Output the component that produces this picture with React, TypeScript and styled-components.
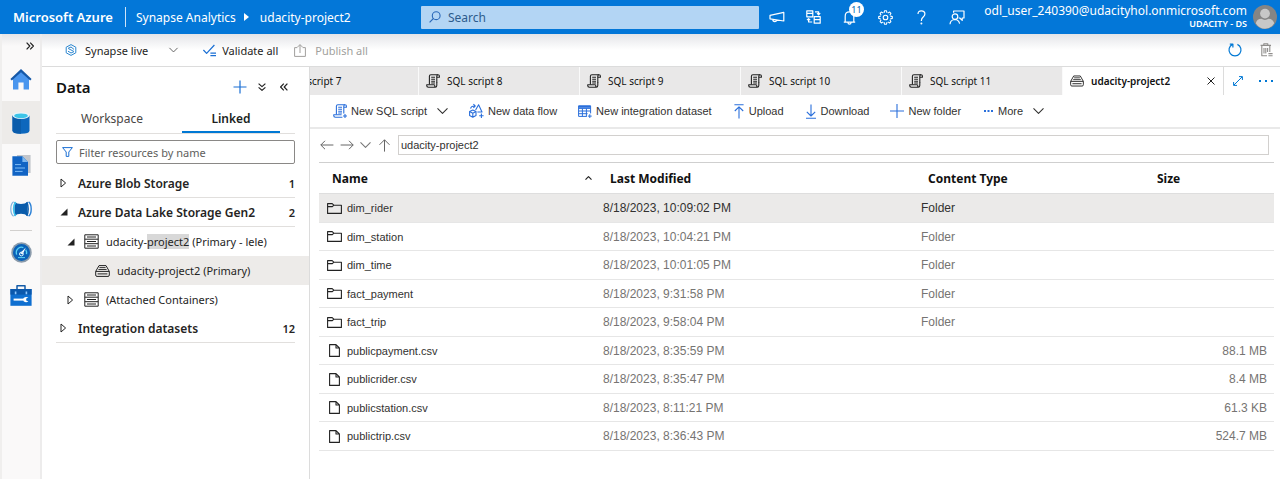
import React from 'react';
import styled, { createGlobalStyle, css } from 'styled-components';

const GlobalStyle = createGlobalStyle`
  *, *::before, *::after { box-sizing: border-box; }
  body { margin: 0; background: #fff; }
  button, input { font: inherit; color: inherit; }
  #root { min-height: 100vh; display: flex; flex-direction: column; }
`;

const ui = '"Noto Sans", "Open Sans", sans-serif';
const grid = '"Liberation Sans", Arial, sans-serif';
const blue = '#0078d4';

/* ---------- shared ---------- */

const PlainButton = styled.button`
  display: inline-flex;
  align-items: center;
  justify-content: center;
  padding: 0;
  border: 0;
  background: none;
  cursor: pointer;
  white-space: nowrap;
`;

const Svg = styled.svg`
  display: block;
  flex: none;
  overflow: visible;
`;

type IconProps = {
  w: number;
  h?: number;
  box?: string;
  color?: string;
  sw?: number;
  children: React.ReactNode;
};

function Icon({ w, h = w, box, color = 'currentColor', sw = 1, children }: IconProps) {
  return (
    <Svg
      width={w}
      height={h}
      viewBox={box ?? `0 0 ${w} ${h}`}
      fill="none"
      stroke={color}
      strokeWidth={sw}
      strokeLinejoin="round"
      aria-hidden="true"
    >
      {children}
    </Svg>
  );
}

const ChevronDown = ({ w = 11, color = '#323130' }: { w?: number; color?: string }) => (
  <Icon w={w} h={6} box="0 0 11 6" color={color} sw={1.1}>
    <path d="M.5.4 5.5 5.4 10.5.4" />
  </Icon>
);

const ScriptIcon = ({ color = '#222', add = false }: { color?: string; add?: boolean }) => (
  <Icon w={14} color={color} sw={1.1}>
    <path d="M3.4 10.6V2.2Q3.4.7 4.9.7H12Q13.4.7 13.4 2.1V3.3H10.8" />
    <path d={add ? 'M12 .7Q10.8.7 10.8 2.1V9.4' : 'M12 .7Q10.8.7 10.8 2.1V8.6'} />
    <path d={add ? 'M8.6 10.7H.7V11.6Q.7 13.3 2.4 13.3H9.4' : 'M8.6 10.7H.7V11.6Q.7 13.3 2.4 13.3H9.2Q10.8 13.3 10.8 11.6V8M8.6 10.7Q8.5 13 9.6 13.2'} />
    <path d="M5.2 3.2H9M5.2 5.2H9M5.2 7.2H9M5.2 9H9" />
    {add && <path d="M12 10V14M10 12H14" />}
  </Icon>
);

const ContainerIcon = ({ w = 15 }: { w?: number }) => (
  <Icon w={w} h={12} box="0 0 15 12" color="#222">
    <path d="M4 .6H11L14.3 6.4V10Q14.3 11.4 13 11.4H2Q.7 11.4.7 10V6.4ZM.7 6.4H14.3M2.6 8.9H12.4" />
    <path d="M4.4 2.6H10.6M3.4 4.5H11.6" strokeWidth=".9" />
  </Icon>
);

const StorageIcon = () => (
  <Icon w={15} h={15} color="#222">
    <path d="M.8.8H14.2V14.2H.8ZM.8 5.2H14.2M.8 9.7H14.2M3 3H12M3 7.5H12M3 12H12" />
  </Icon>
);

/* ---------- top bar ---------- */

const TopBar = styled.header`
  display: flex;
  align-items: center;
  height: 34px;
  background: #0377d8;
  color: #fff;
  font-family: ${ui};
  font-size: 12px;
`;

const Breadcrumb = styled.nav`
  display: flex;
  align-items: center;
  flex: 0 0 421px;
  padding-left: 13px;
  white-space: nowrap;

  a { color: inherit; text-decoration: none; }
`;

const Brand = styled.a`
  width: 112px;
  font-size: 13px;
  font-weight: 600;
`;

const BrandRule = styled.span`
  width: 1px;
  height: 20px;
  margin-right: 10px;
  background: #cfe4f8;
`;

const CrumbArrow = styled.span`
  margin: 0 11px 0 8px;
  border: 4px solid transparent;
  border-left: 5px solid #fff;
  border-right: 0;
`;

const SearchBox = styled.label`
  display: flex;
  align-items: center;
  flex: 0 1 338px;
  gap: 7px;
  height: 23px;
  padding: 0 8px;
  border-radius: 1px;
  background: #b3d5f4;
  color: #2c5f9e;

  input {
    flex: 1;
    min-width: 0;
    border: 0;
    outline: 0;
    background: none;
    padding: 0;
  }
  input::placeholder { color: #2d5b8c; opacity: 1; }
`;

const TopIcons = styled.div`
  display: flex;
`;

const TopIconButton = styled(PlainButton)`
  position: relative;
  width: 36px;
  height: 32px;
`;

const Badge = styled.span`
  position: absolute;
  top: 1px;
  left: 18px;
  width: 15px;
  height: 15px;
  border-radius: 50%;
  background: #fff;
  color: #0063b1;
  font-size: 9px;
  line-height: 15px;
  text-align: center;
`;

const Account = styled.div`
  display: flex;
  align-items: center;
  gap: 6px;
  margin-left: auto;
  padding-right: 3px;
  text-align: right;
  line-height: 14px;
`;

const Directory = styled.div`
  font-size: 9px;
  line-height: 12px;
  font-weight: 600;
`;

/* ---------- frame ---------- */

const Frame = styled.div`
  display: flex;
  flex: 1;
`;

const Rail = styled.nav`
  display: flex;
  flex-direction: column;
  flex: 0 0 42px;
  border-left: 2px solid #f0efee;
  border-right: 2px solid #edecec;
  background: linear-gradient(#e6e6e8, #faf9f9 12px);
`;

const RailToggle = styled(PlainButton)`
  justify-content: flex-end;
  height: 24px;
  padding-right: 6px;
`;

const RailButton = styled(PlainButton)<{ $on?: boolean }>`
  height: 43px;
  background: ${p => (p.$on ? '#edebe9' : 'transparent')};
`;

const RailRule = styled.hr`
  width: 22px;
  margin: 0 auto;
  border: 0;
  border-top: 1px solid #d2d0ce;
`;

const Workspace = styled.div`
  display: flex;
  flex-direction: column;
  flex: 1;
  min-width: 0;
`;

const CommandBar = styled.div`
  display: flex;
  align-items: center;
  height: 33px;
  padding: 0 7px 0 23px;
  border-bottom: 1px solid #dcdcdc;
  background: linear-gradient(#e4e5e8, #fff 16px);
  color: #252423;
  font-family: ${ui};
  font-size: 11px;
`;

const Command = styled(PlainButton)<{ $gap?: number; $after?: number }>`
  gap: ${p => p.$gap ?? 8}px;
  margin-right: ${p => p.$after ?? 0}px;
  &:disabled { color: #a19f9d; cursor: default; }
`;

const PushRight = styled.div`
  display: flex;
  gap: 18px;
  margin-left: auto;
`;

const Body = styled.div`
  display: flex;
  flex: 1;
`;

/* ---------- data panel ---------- */

const Panel = styled.aside`
  flex: 0 0 268px;
  border-right: 1px solid #dcdcdc;
  color: #252423;
  font-family: ${ui};
  font-size: 11px;
`;

const PanelHead = styled.div`
  display: flex;
  align-items: center;
  height: 38px;
  padding: 2px 14px 0 14px;

  h2 {
    flex: 1;
    margin: 0;
    color: #111;
    font-size: 15px;
    font-weight: 600;
  }
`;

const HeadButton = styled(PlainButton)`
  width: 22px;
  height: 20px;
`;

const PanelTabs = styled.div`
  display: flex;
  margin: 0 14px;
  border-bottom: 1px solid #e1dfdd;
  font-size: 12px;
`;

const PanelTab = styled(PlainButton)<{ $on?: boolean }>`
  width: ${p => (p.$on ? 98 : 112)}px;
  height: 28px;
  margin: ${p => (p.$on ? '0 0 0 14px' : '0')};
  border-bottom: 2px solid ${p => (p.$on ? blue : 'transparent')};
  color: ${p => (p.$on ? '#201f1e' : '#484644')};
  font-weight: ${p => (p.$on ? 600 : 400)};
`;

const Filter = styled.label`
  display: flex;
  align-items: center;
  gap: 6px;
  height: 24px;
  margin: 6px 14px 5px;
  padding: 0 5px;
  border: 1px solid #8a8886;
  border-radius: 2px;

  input {
    flex: 1;
    min-width: 0;
    border: 0;
    outline: 0;
    padding: 0;
    background: none;
  }
  input::placeholder { color: #605e5c; opacity: 1; }
`;

const Tree = styled.ul`
  margin: 0;
  padding: 0;
  list-style: none;
`;

const TreeGroup = styled.li`
  display: flex;
  align-items: center;
  height: 29px;
  margin: 0 14px;
  padding-left: 4px;
  border-bottom: 1px solid #e1dfdd;
  font-size: 12px;
  font-weight: 600;

  span { flex: 1; }
  b { font-size: 11px; font-weight: 600; }
`;

const TreeItem = styled.li<{ $indent: number; $on?: boolean }>`
  display: flex;
  align-items: center;
  gap: 7px;
  height: 29px;
  padding-left: ${p => p.$indent}px;
  background: ${p => (p.$on ? '#edebe9' : 'transparent')};

  mark { background: #d8d8d8; color: inherit; }
`;

const Twisty = styled(PlainButton)`
  justify-content: flex-start;
  width: 18px;
  height: 20px;
  flex: none;
`;

const TreeTwisty = styled(Twisty)`
  width: 10px;
`;

/* ---------- editor ---------- */

const Editor = styled.main`
  display: flex;
  flex-direction: column;
  flex: 1;
  min-width: 0;
`;

const TabStrip = styled.div`
  display: flex;
  height: 28px;
  font-family: ${ui};
  font-size: 10px;
`;

const TabScroller = styled.div`
  display: flex;
  flex: 1;
  min-width: 0;
  justify-content: flex-end;
  overflow: hidden;
  background: #e9e8e8;
`;

const EditorTab = styled.div<{ $on?: boolean }>`
  display: flex;
  align-items: center;
  gap: 7px;
  flex: 0 0 161px;
  padding: 0 8px 0 7px;
  border-right: 1px solid ${p => (p.$on ? '#dcdcdc' : '#fafafa')};
  background: ${p => (p.$on ? '#fff' : '#e9e8e8')};
  color: #111;
  font-weight: ${p => (p.$on ? 600 : 400)};
  white-space: nowrap;

  span { flex: 1; }
`;

const TabTools = styled.div`
  display: flex;
  align-items: center;
  flex: 0 0 54px;
`;

const TabTool = styled(PlainButton)`
  flex: none;
  width: 28px;
`;

const Actions = styled.div`
  display: flex;
  align-items: center;
  gap: 21px;
  height: 34px;
  padding-left: 23px;
  border-bottom: 2px solid #e9e9e9;
  color: #323130;
  font-family: ${grid};
  font-size: 11px;
`;

const Action = styled(PlainButton)`
  gap: 4px;
`;

const ActionLabel = styled.span<{ $menu?: boolean }>`
  margin-right: ${p => (p.$menu ? 6 : 0)}px;
`;

const PathBar = styled.div`
  display: flex;
  align-items: center;
  gap: 6px;
  padding: 6px 11px 7px 10px;
  font-family: ${grid};
  font-size: 12px;
  color: #323130;
`;

const PathInput = styled.input`
  flex: 1;
  min-width: 0;
  height: 20px;
  padding: 0 2px;
  border: 1px solid #d2d0ce;
  outline: 0;
  font-size: 11px;
`;

const FileTable = styled.table`
  width: calc(100% - 15px);
  margin-left: 9px;
  border-collapse: collapse;
  table-layout: fixed;
  font-family: ${grid};
  font-size: 12px;
  color: #767472;
`;

const HeadCell = styled.th<{ $w?: number }>`
  width: ${p => (p.$w ? `${p.$w}px` : 'auto')};
  height: 31px;
  padding: 0 5px 0 13px;
  border-top: 1px solid #cfcfcf;
  border-bottom: 1px solid #dedede;
  color: #111;
  font-family: ${ui};
  font-size: 12px;
  font-weight: 700;
  text-align: left;
`;

const HeadLabel = styled.div`
  display: flex;
  align-items: center;
  justify-content: space-between;
`;

const FileRow = styled.tr<{ $on?: boolean }>`
  height: 28px;
  &:nth-child(odd) { height: 29px; }
  ${p => p.$on && css`
    background: #ebeae9;
    color: #323130;
  `}
`;

const Cell = styled.td`
  padding: 0 7px 0 6px;
  border-bottom: 1px solid #e6e6e6;
`;

const NameCell = styled(Cell)`
  padding-left: 8px;
  color: #323130;
  font-size: 11px;
`;

const SizeCell = styled(Cell)`
  text-align: right;
`;

const FileName = styled.div`
  display: flex;
  align-items: center;
  gap: 5px;
`;

const FileGlyph = styled.span`
  display: flex;
  justify-content: center;
  width: 15px;
`;

/* ---------- data ---------- */

const scriptTabs = [7, 8, 9, 10, 11];

const files = [
  { name: 'dim_rider', date: '8/18/2023, 10:09:02 PM', folder: true, size: '' },
  { name: 'dim_station', date: '8/18/2023, 10:04:21 PM', folder: true, size: '' },
  { name: 'dim_time', date: '8/18/2023, 10:01:05 PM', folder: true, size: '' },
  { name: 'fact_payment', date: '8/18/2023, 9:31:58 PM', folder: true, size: '' },
  { name: 'fact_trip', date: '8/18/2023, 9:58:04 PM', folder: true, size: '' },
  { name: 'publicpayment.csv', date: '8/18/2023, 8:35:59 PM', folder: false, size: '88.1 MB' },
  { name: 'publicrider.csv', date: '8/18/2023, 8:35:47 PM', folder: false, size: '8.4 MB' },
  { name: 'publicstation.csv', date: '8/18/2023, 8:11:21 PM', folder: false, size: '61.3 KB' },
  { name: 'publictrip.csv', date: '8/18/2023, 8:36:43 PM', folder: false, size: '524.7 MB' },
];

/* ---------- small drawings ---------- */

const Closed = () => (
  <Icon w={7} h={10} color="#222">
    <path d="M1 1V9L5.6 5Z" />
  </Icon>
);

const Opened = () => (
  <Icon w={8} h={8} color="none">
    <path d="M7.5.5V7.5H.5Z" fill="#222" />
  </Icon>
);

const Gear = () => {
  const teeth = Array.from({ length: 8 }, (_, i) => (
    <path key={i} d="M6 2.8 6.6.7H8.4L9 2.8" transform={`rotate(${i * 45} 7.5 7.5)`} />
  ));
  return (
    <Icon w={15} sw={1.1}>
      {teeth}
      <circle cx="7.5" cy="7.5" r="2.3" />
    </Icon>
  );
};

function TopBarView() {
  return (
    <TopBar>
      <Breadcrumb aria-label="Breadcrumb">
        <Brand href="#">Microsoft Azure</Brand>
        <BrandRule />
        <a href="#">Synapse Analytics</a>
        <CrumbArrow />
        <a href="#">udacity-project2</a>
      </Breadcrumb>
      <SearchBox>
        <Icon w={12} color="#2a68b8" sw={1.1}>
          <circle cx="7.2" cy="4.7" r="3.9" />
          <path d="M4.4 7.5.6 11.4" />
        </Icon>
        <input type="search" placeholder="Search" aria-label="Search" />
      </SearchBox>
      <TopIcons>
        <TopIconButton aria-label="Announcements">
          <Icon w={16} h={12} sw={1.2}>
            <path d="M1 4.4 14.8 1.3V10L1 7.8ZM3.6 8.3Q3.8 10.6 5.8 10.6 7.4 10.6 7.8 9" />
          </Icon>
        </TopIconButton>
        <TopIconButton aria-label="Switch directory">
          <Icon w={15} h={14} sw={1.2}>
            <path d="M.8.8H6.8V6.8H.8ZM.8 3.4H6.8M8.2 6.6H14.2V13.2H8.2ZM8.2 9.6H14.2M9 1.8H12.6V4.6M11 3.2 12.6 4.9 14.2 3.2M6.2 12H2.6V9M1 10.2 2.6 8.6 4.2 10.2" />
          </Icon>
        </TopIconButton>
        <TopIconButton aria-label="Notifications, 11 new">
          <Icon w={13} h={15} sw={1.2}>
            <path d="M.8 12.1H12.2M2.2 12V6.2Q2.2 1.8 6.5 1.8 10.8 1.8 10.8 6.2V12M4.9 12.4Q5 14.2 6.5 14.2 8 14.2 8.1 12.4" />
          </Icon>
          <Badge>11</Badge>
        </TopIconButton>
        <TopIconButton aria-label="Settings">
          <Gear />
        </TopIconButton>
        <TopIconButton aria-label="Help">
          <Icon w={9} h={15} sw={1.2}>
            <path d="M1 4Q1 .9 4.3.9 7.9.9 7.9 4 7.9 5.6 6.2 7 4.4 8.5 4.4 10.6V11" />
            <circle cx="4.4" cy="13.6" r=".4" fill="currentColor" />
          </Icon>
        </TopIconButton>
        <TopIconButton aria-label="Feedback">
          <Icon w={16} h={15} sw={1.2}>
            <circle cx="6" cy="6.6" r="2.8" />
            <path d="M1 14.3Q1.4 9.6 6 9.5 9.6 9.6 10.6 13.6M4.6 2.8V1H15V8H13.2V10.4L10.8 8H9.6" />
          </Icon>
        </TopIconButton>
      </TopIcons>
      <Account>
        <div>
          <div>odl_user_240390@udacityhol.onmicrosoft.com</div>
          <Directory>UDACITY - DS</Directory>
        </div>
        <Icon w={24} color="none">
          <circle cx="12" cy="12" r="12" fill="#858585" />
          <circle cx="12" cy="8.6" r="4.9" fill="#c8c8c8" />
          <path d="M2.8 18.2Q4 13.8 8.4 13.8 12 16 15.6 13.8 20 13.8 21.2 18.2 18 23.6 12 23.8 6 23.6 2.8 18.2Z" fill="#c8c8c8" />
        </Icon>
      </Account>
    </TopBar>
  );
}

function RailView() {
  return (
    <Rail aria-label="Hubs">
      <RailToggle aria-label="Expand navigation">
        <Icon w={8} h={8} color="#222" sw={1.2}>
          <path d="M.6.6 3.8 4 .6 7.4M4.2.6 7.4 4 4.2 7.4" />
        </Icon>
      </RailToggle>
      <RailButton aria-label="Home">
        <Icon w={22} h={21} color="none">
          <path d="M3 9 11 2.2 19 9V20.5H13.6V13.6H8.4V20.5H3Z" fill="#4a96ee" />
          <path d="M11 0 21.6 10 20.2 11.4 11 3.2 1.8 11.4.4 10Z" fill="#1558a8" />
        </Icon>
      </RailButton>
      <RailButton $on aria-label="Data">
        <Icon w={18} h={22} color="none">
          <path d="M.5 3.5V18.6Q.5 21.8 9 21.8 17.5 21.8 17.5 18.6V3.5Z" fill="#0d67bd" />
          <path d="M9 6V21.8Q.5 21.8.5 18.6V3.5Z" fill="#0a5cab" />
          <ellipse cx="9" cy="3.6" rx="8.5" ry="3.4" fill="#e8f4fb" />
          <ellipse cx="9" cy="3.8" rx="6.8" ry="2.4" fill="#3cc4e8" />
        </Icon>
      </RailButton>
      <RailButton aria-label="Develop">
        <Icon w={19} h={21} color="none">
          <path d="M5 0H18.6V18H5Z" fill="#c3c6cb" />
          <path d="M.4 1.2H10.4L16 7V20.8H.4Z" fill="#1164c4" />
          <path d="M10.4 1.2V7H16Z" fill="#7db8f0" />
          <path d="M3 9.6H9M3 13H13M3 16.4H10.6" stroke="#7fbcf5" strokeWidth="1" />
        </Icon>
      </RailButton>
      <RailButton aria-label="Integrate">
        <Icon w={22} h={16} color="none">
          <path d="M4.4 1Q7 3 11 3T17.6 1V15Q15 12.8 11 12.8T4.4 15Z" fill="#0a5cab" />
          <path d="M3.6.8Q.8 2.6.8 8T3.6 15.2" stroke="#7fb2dc" strokeWidth="1.2" />
          <path d="M5.6 1Q3.6 4 3.6 8T5.6 15" stroke="#3cc4ee" strokeWidth="1.6" />
          <path d="M18.6.8Q21.2 2.6 21.2 8T18.6 15.2" stroke="#2a80d6" strokeWidth="1.4" />
          <path d="M16.8 1Q18.2 4 18.2 8T16.8 15" stroke="#0a5cab" strokeWidth="1.4" />
        </Icon>
      </RailButton>
      <RailRule />
      <RailButton aria-label="Monitor">
        <Icon w={21} color="none">
          <circle cx="10.5" cy="10.5" r="10.2" fill="#8b9bab" />
          <circle cx="10.5" cy="10.5" r="8.5" fill="#0a62b8" />
          <path d="M14.7 7.6Q16 9.6 15.5 12.2M5.6 12.6Q4.4 8.6 7.4 6.2 9.8 4.6 12.4 5.6" stroke="#58d0f4" strokeWidth="1.3" />
          <path d="M9.2 11.2 14.8 5.4 11.6 12.6Z" fill="#fff" />
          <circle cx="10.4" cy="12" r="1.9" stroke="#d8f2ff" />
          <path d="M7 15.6H14" stroke="#58d0f4" />
        </Icon>
      </RailButton>
      <RailButton aria-label="Manage">
        <Icon w={22} h={21} color="none">
          <path d="M7 4.4V.8H15V4.4" stroke="#145ca8" strokeWidth="1.5" />
          <path d="M.4 4H21.6V20.8H.4Z" fill="#0f6fd0" />
          <path d="M.4 4H21.6V9.6H.4Z" fill="#0b58ac" />
          <path d="M5.6 6.4V9.2M16.4 6.4V9.2" stroke="#8cc6ff" strokeWidth="1.6" />
          <path d="M3.6 14.6H13.4" stroke="#fff" strokeWidth="2" />
          <path d="M18.4 12.6Q16 11.2 13.6 13L12.8 14.6 13.6 16.2Q16 18 18.4 16.4L16.2 15.6V13.6Z" fill="#fff" />
        </Icon>
      </RailButton>
    </Rail>
  );
}

function PanelView() {
  return (
    <Panel>
      <PanelHead>
        <h2>Data</h2>
        <HeadButton aria-label="Add resource">
          <Icon w={14} color="#1a6fd4" sw={1.2}>
            <path d="M7 .5V13.5M.5 7H13.5" />
          </Icon>
        </HeadButton>
        <HeadButton aria-label="Expand all">
          <Icon w={8} h={8} color="#222" sw={1.2}>
            <path d="M.6.6 4 3.6 7.4.6M.6 4.4 4 7.4 7.4 4.4" />
          </Icon>
        </HeadButton>
        <HeadButton aria-label="Collapse panel">
          <Icon w={8} h={8} color="#222" sw={1.2}>
            <path d="M3.8.6.6 4 3.8 7.4M7.4.6 4.2 4 7.4 7.4" />
          </Icon>
        </HeadButton>
      </PanelHead>
      <PanelTabs role="tablist">
        <PanelTab role="tab" aria-selected="false">Workspace</PanelTab>
        <PanelTab role="tab" aria-selected="true" $on>Linked</PanelTab>
      </PanelTabs>
      <Filter>
        <Icon w={11} h={10} color="#1a6fd4">
          <path d="M.6.6H10.4L6.8 5V9.4H4.2V5Z" />
        </Icon>
        <input type="text" placeholder="Filter resources by name" aria-label="Filter resources by name" />
      </Filter>
      <Tree>
        <TreeGroup>
          <Twisty aria-label="Expand"><Closed /></Twisty>
          <span>Azure Blob Storage</span>
          <b>1</b>
        </TreeGroup>
        <TreeGroup>
          <Twisty aria-label="Collapse"><Opened /></Twisty>
          <span>Azure Data Lake Storage Gen2</span>
          <b>2</b>
        </TreeGroup>
        <TreeItem $indent={25}>
          <TreeTwisty aria-label="Collapse"><Opened /></TreeTwisty>
          <StorageIcon />
          <span>udacity-<mark>project2</mark> (Primary - lele)</span>
        </TreeItem>
        <TreeItem $indent={53} $on>
          <ContainerIcon />
          <span>udacity-project2 (Primary)</span>
        </TreeItem>
        <TreeItem $indent={25}>
          <TreeTwisty aria-label="Expand"><Closed /></TreeTwisty>
          <StorageIcon />
          <span>(Attached Containers)</span>
        </TreeItem>
        <TreeGroup>
          <Twisty aria-label="Expand"><Closed /></Twisty>
          <span>Integration datasets</span>
          <b>12</b>
        </TreeGroup>
      </Tree>
    </Panel>
  );
}

function ActionsView() {
  const c = '#2a6fdb';
  return (
    <Actions>
      <Action>
        <ScriptIcon color={c} add />
        <ActionLabel $menu>New SQL script</ActionLabel>
        <ChevronDown />
      </Action>
      <Action>
        <Icon w={15} h={14} color={c} sw={1.1}>
          <path d="M3.8 6 7 7.6V11.4L3.8 13.2.6 11.4V7.6ZM.6 7.6 3.8 9.2 7 7.6M3.8 9.2V13.2M1.6 4.6Q2 2 5.6 2M4.4.2 6.2 2 4.4 3.8M6.6 6 9.6.8 13 8H8.4M12.4 9.6V14M10.2 11.8H14.6" />
        </Icon>
        <ActionLabel>New data flow</ActionLabel>
      </Action>
      <Action>
        <Icon w={14} h={13} color={c}>
          <path d="M8.8 11.4H.6V.8H12.6V8.4M.6 3.4H12.6M.6 6H12.6M.6 8.7H9.6M4.4 3.4V11.4M8.4 3.4V11.4M11.8 9.2V13M9.9 11.1H13.7" />
          <path d="M.6 1.8H12.6" strokeWidth="2" />
        </Icon>
        <ActionLabel>New integration dataset</ActionLabel>
      </Action>
      <Action>
        <Icon w={12} h={15} color={c} sw={1.1}>
          <path d="M1.4.8H10.6M6 3V14.6M1.8 7 6 2.8 10.2 7" />
        </Icon>
        <ActionLabel>Upload</ActionLabel>
      </Action>
      <Action>
        <Icon w={12} h={15} color={c} sw={1.1}>
          <path d="M1 14.2H11M6 .4V12M1.8 7.8 6 12 10.2 7.8" />
        </Icon>
        <ActionLabel>Download</ActionLabel>
      </Action>
      <Action>
        <Icon w={14} color={c} sw={1.1}>
          <path d="M7 0V14M0 7H14" />
        </Icon>
        <ActionLabel>New folder</ActionLabel>
      </Action>
      <Action>
        <Icon w={12} h={2} color="none">
          <path d="M2 0H4V2H2ZM5.5 0H7.5V2H5.5ZM9 0H11V2H9Z" fill={c} />
        </Icon>
        <ActionLabel $menu>More</ActionLabel>
        <ChevronDown />
      </Action>
    </Actions>
  );
}

function EditorView() {
  return (
    <Editor>
      <TabStrip>
        <TabScroller>
          {scriptTabs.map(n => (
            <EditorTab key={n}>
              <ScriptIcon />
              <span>SQL script {n}</span>
            </EditorTab>
          ))}
          <EditorTab $on>
            <ContainerIcon w={14} />
            <span>udacity-project2</span>
            <PlainButton aria-label="Close tab">
              <Icon w={8} h={8} color="#222">
                <path d="M.5.5 7.5 7.5M7.5.5.5 7.5" />
              </Icon>
            </PlainButton>
          </EditorTab>
        </TabScroller>
        <TabTools>
          <TabTool aria-label="Full screen">
            <Icon w={10} color={blue}>
              <path d="M.8 9.2 9.2.8M6 .6H9.4V4M.6 6V9.4H4" />
            </Icon>
          </TabTool>
          <TabTool aria-label="More tabs">
            <Icon w={15} h={2} color="none">
              <path d="M0 0H2V2H0ZM6 0H8V2H6ZM12 0H14V2H12Z" fill={blue} />
            </Icon>
          </TabTool>
        </TabTools>
      </TabStrip>
      <ActionsView />
      <PathBar>
        <PlainButton aria-label="Back">
          <Icon w={14} h={10} color="#666"><path d="M13.4 5H.8M5 .8.8 5 5 9.2" /></Icon>
        </PlainButton>
        <PlainButton aria-label="Forward">
          <Icon w={14} h={10} color="#666"><path d="M.6 5H13.2M9 .8 13.2 5 9 9.2" /></Icon>
        </PlainButton>
        <PlainButton aria-label="Recent folders"><ChevronDown color="#777" /></PlainButton>
        <PlainButton aria-label="Up">
          <Icon w={15} h={13} color="#666"><path d="M7.5 12.6V.8M2.5 5.8 7.5.8 12.5 5.8" /></Icon>
        </PlainButton>
        <PathInput type="text" aria-label="Path" defaultValue="udacity-project2" />
      </PathBar>
      <FileTable>
        <thead>
          <tr>
            <HeadCell>
              <HeadLabel>
                Name
                <Icon w={7} h={4} color="#222" sw={1.2}><path d="M.5 3.6 3.5.6 6.5 3.6" /></Icon>
              </HeadLabel>
            </HeadCell>
            <HeadCell $w={318}>Last Modified</HeadCell>
            <HeadCell $w={229}>Content Type</HeadCell>
            <HeadCell $w={130}>Size</HeadCell>
          </tr>
        </thead>
        <tbody>
          {files.map((f, i) => (
            <FileRow key={f.name} $on={i === 0}>
              <NameCell>
                <FileName>
                  <FileGlyph>
                    {f.folder ? (
                      <Icon w={15} h={11} color="#222" sw={1.1}>
                        <path d="M.6.6H5.2L6.8 2.2H14.4V10.4H.6ZM.6 3.6H5.4L6.8 2.2" />
                      </Icon>
                    ) : (
                      <Icon w={11} h={13} color="#222" sw={1.1}>
                        <path d="M.6.6H7L10.4 4V12.4H.6ZM7 .6V4H10.4" />
                      </Icon>
                    )}
                  </FileGlyph>
                  {f.name}
                </FileName>
              </NameCell>
              <Cell>{f.date}</Cell>
              <Cell>{f.folder ? 'Folder' : ''}</Cell>
              <SizeCell>{f.size}</SizeCell>
            </FileRow>
          ))}
        </tbody>
      </FileTable>
    </Editor>
  );
}

export default function App() {
  return (
    <>
      <GlobalStyle />
      <TopBarView />
      <Frame>
        <RailView />
        <Workspace>
          <CommandBar>
            <Command $after={21}>
              <Icon w={12} h={12} color="#2a86d0">
                <path d="M6 .6 10.8 3.2V8.8L6 11.4 1.2 8.8V3.2Z" />
                <path d="M3 4.4 6 3 9 5.4M3 7.2 6 9 9 7.6M3.4 4.6 8.8 7.4" />
              </Icon>
              Synapse live
            </Command>
            <Command aria-label="Choose mode" $after={25}>
              <ChevronDown w={9} color="#555" />
            </Command>
            <Command $gap={6} $after={16}>
              <Icon w={13} h={13} color="#1a6fd4" sw={1.2}>
                <path d="M.4 6 3.6 9.4 11.4 1M7.4 9.2H13M7.4 11.6H13" />
              </Icon>
              Validate all
            </Command>
            <Command disabled $gap={9}>
              <Icon w={12} h={13} color="#a19f9d">
                <path d="M3.4 3.6H.6V12.4H11.4V3.6H8.6M6 9V.8M3.6 3 6 .6 8.4 3" />
              </Icon>
              Publish all
            </Command>
            <PushRight>
              <PlainButton aria-label="Refresh">
                <Icon w={14} h={14} color={blue} sw={1.2}>
                  <path d="M4.6 1.4A6 6 0 1 0 9.4 1.4M4.9 4.4V1.2H1.8" />
                </Icon>
              </PlainButton>
              <PlainButton aria-label="Discard all" disabled>
                <Icon w={13} h={14} color="#8f8d8b" sw={1.1}>
                  <path d="M.6 2.4H11M3.8 2.4V.7H7.8V2.4M1.8 2.6V12.8H7M9.8 2.6V9M4 5V10.4M5.8 5V10.4M7.6 5V9M8.4 10.6H12.6M8.4 12.8H12.6" />
                </Icon>
              </PlainButton>
            </PushRight>
          </CommandBar>
          <Body>
            <PanelView />
            <EditorView />
          </Body>
        </Workspace>
      </Frame>
    </>
  );
}
